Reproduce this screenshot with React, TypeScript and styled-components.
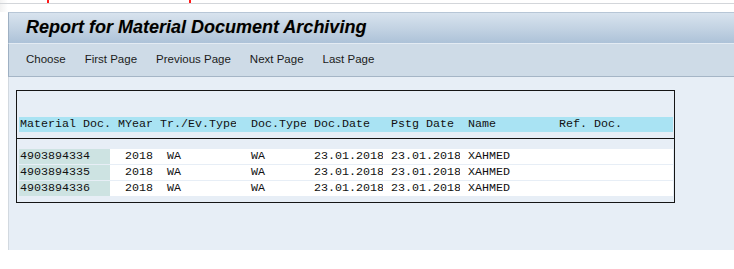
import React from "react";
import styled, { createGlobalStyle } from "styled-components";

const GlobalStyle = createGlobalStyle`
  html, body {
    margin: 0;
    padding: 0;
    background: #ffffff;
  }
  body {
    font-family: "Liberation Sans", Arial, sans-serif;
  }
`;

const CHAR = 7;

const Page = styled.div`
  position: relative;
  width: 734px;
  height: 269px;
  overflow: hidden;
  background: #ffffff;
`;

const TopStrip = styled.div`
  height: 12px;
  box-sizing: border-box;
  padding-top: 3px;
  background: linear-gradient(to right, #f2f2f2 0, #ffffff 8px);
`;

const TopLine = styled.div`
  height: 1px;
  background: #d3d6da;
`;

// red annotation corners left over from a marked-up screenshot
const MarkLeft = styled.i`
  position: absolute;
  top: 0;
  left: 47px;
  width: 2px;
  height: 3px;
  background: #ff1a1a;
`;

const MarkRight = styled.i`
  position: absolute;
  top: 0;
  left: 189px;
  width: 2px;
  height: 3px;
  background: #ff1a1a;
`;

const Window = styled.div`
  margin-left: 8px;
  width: 726px;
  height: 238px;
  display: flex;
  flex-direction: column;
`;

const TitleBar = styled.div`
  height: 32px;
  box-sizing: border-box;
  border-top: 1px solid #b7c6d6;
  border-left: 1px solid #9eb0c3;
  border-bottom: 1px solid #e3ebf3;
  background: linear-gradient(to bottom, #d8e3ee 0%, #c3d3e3 50%, #adc2d8 100%);
  display: flex;
  align-items: center;
  padding: 0 0 1px 17px;
`;

const Title = styled.h1`
  margin: 0;
  font-family: "Liberation Sans", Arial, sans-serif;
  font-size: 18px;
  font-weight: bold;
  font-style: italic;
  color: #000000;
  text-shadow: 0 0 1px rgba(120, 80, 0, 0.25);
`;

const Toolbar = styled.div`
  height: 33px;
  box-sizing: border-box;
  border-left: 1px solid #9eb0c3;
  border-bottom: 1px solid #a5b5c6;
  background: #cedbe7;
  display: flex;
  align-items: center;
  gap: 19px;
  padding: 0 0 2px 17px;
`;

const ToolButton = styled.span`
  font-family: "Liberation Sans", Arial, sans-serif;
  font-size: 11.5px;
  color: #1b1b1b;
  cursor: pointer;
`;

const Content = styled.div`
  flex: 1;
  background: #e7eef6;
  border-left: 1px solid #d2d9e0;
  padding: 13px 0 0 7px;
`;

const ListBox = styled.div`
  width: 659px;
  box-sizing: border-box;
  border: 1px solid #151515;
  font-family: "Liberation Mono", "Courier New", monospace;
  font-size: 11.667px;
  color: #111111;
`;

const HeadSection = styled.div`
  padding: 26px 1px 6px 2px;
  border-bottom: 1px solid #151515;
`;

const BodySection = styled.div`
  padding: 10px 1px 6px 2px;
  display: flex;
  flex-direction: column;
  gap: 1px;
`;

const Line = styled.div<{ $head?: boolean }>`
  display: grid;
  grid-template-columns: repeat(93, ${CHAR}px) 1fr;
  height: 15px;
  line-height: 15px;
  white-space: pre;
  background: ${(p) => (p.$head ? "#a9e3f3" : "#ffffff")};
`;

const Cell = styled.span<{ $col: number; $span: number; $right?: boolean; $key?: boolean }>`
  grid-column: ${(p) => p.$col + 1} / span ${(p) => p.$span};
  grid-row: 1;
  padding-left: 1px;
  text-align: ${(p) => (p.$right ? "right" : "left")};
  margin-right: ${(p) => (p.$right ? "-1px" : "0")};
  background: ${(p) => (p.$key ? "#cde3e2" : "transparent")};
  overflow: hidden;
`;

const columns = [
  { label: "Material Doc.", col: 0, span: 13 },
  { label: "MYear", col: 14, span: 5 },
  { label: "Tr./Ev.Type", col: 20, span: 11 },
  { label: "Doc.Type", col: 33, span: 8 },
  { label: "Doc.Date", col: 42, span: 10 },
  { label: "Pstg Date", col: 53, span: 10 },
  { label: "Name", col: 64, span: 12 },
  { label: "Ref. Doc.", col: 77, span: 12 },
];

const rows = [
  { doc: "4903894334", year: "2018", mvt: "WA", type: "WA", docDate: "23.01.2018", pstgDate: "23.01.2018", name: "XAHMED" },
  { doc: "4903894335", year: "2018", mvt: "WA", type: "WA", docDate: "23.01.2018", pstgDate: "23.01.2018", name: "XAHMED" },
  { doc: "4903894336", year: "2018", mvt: "WA", type: "WA", docDate: "23.01.2018", pstgDate: "23.01.2018", name: "XAHMED" },
];

const toolbarItems = ["Choose", "First Page", "Previous Page", "Next Page", "Last Page"];

const App = () => {
  return (
    <>
      <GlobalStyle />
      <Page>
        <TopStrip>
          <TopLine />
        </TopStrip>
        <MarkLeft />
        <MarkRight />
        <Window>
          <TitleBar>
            <Title>Report for Material Document Archiving</Title>
          </TitleBar>
          <Toolbar>
            {toolbarItems.map((item) => (
              <ToolButton key={item}>{item}</ToolButton>
            ))}
          </Toolbar>
          <Content>
            <ListBox>
              <HeadSection>
                <Line $head>
                  {columns.map((c) => (
                    <Cell key={c.label} $col={c.col} $span={c.span}>
                      {c.label}
                    </Cell>
                  ))}
                </Line>
              </HeadSection>
              <BodySection>
                {rows.map((r) => (
                  <Line key={r.doc}>
                    <Cell $col={0} $span={13} $key>
                      {r.doc}
                    </Cell>
                    <Cell $col={14} $span={5} $right>
                      {r.year}
                    </Cell>
                    <Cell $col={21} $span={10}>
                      {r.mvt}
                    </Cell>
                    <Cell $col={33} $span={8}>
                      {r.type}
                    </Cell>
                    <Cell $col={42} $span={10}>
                      {r.docDate}
                    </Cell>
                    <Cell $col={53} $span={10}>
                      {r.pstgDate}
                    </Cell>
                    <Cell $col={64} $span={12}>
                      {r.name}
                    </Cell>
                  </Line>
                ))}
              </BodySection>
            </ListBox>
          </Content>
        </Window>
      </Page>
    </>
  );
};

export default App;
